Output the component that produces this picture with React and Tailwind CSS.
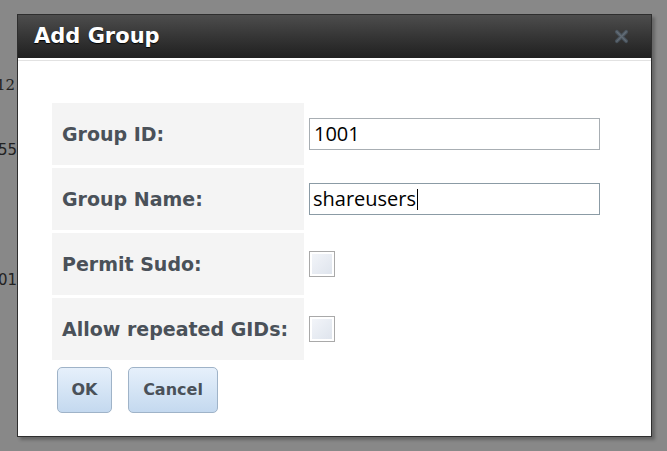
import React from "react";

function Row({ label, children }) {
  return (
    <div className="flex h-[62px] gap-[5px]">
      <div className="flex w-[252px] items-center bg-[#f4f4f4] pl-[10px] text-[19px] font-bold text-[#4a5159]">
        {label}
      </div>
      <div className="flex items-center">{children}</div>
    </div>
  );
}

function Checkbox() {
  return (
    <div className="h-[26px] w-[26px] border border-[#a9a9a9] bg-gradient-to-br from-[#f4f6fa] to-[#dde3ec] shadow-[inset_0_0_0_2px_#ffffff]" />
  );
}

export default function App() {
  return (
    <div
      className="relative h-[451px] w-[667px] overflow-hidden bg-[#888888]"
      style={{ fontFamily: '"DejaVu Sans", Verdana, sans-serif' }}
    >
      <div className="flex flex-col pt-[78px] text-[15px] leading-none text-[#222]" style={{ fontFamily: '"DejaVu Serif", serif' }}>
        <span className="ml-[-4px]">12</span>
        <span className="ml-[-2px] mt-[50px]" style={{ fontFamily: '"DejaVu Sans", sans-serif' }}>55</span>
        <span className="ml-[-2px] mt-[115px]" style={{ fontFamily: '"DejaVu Sans", sans-serif' }}>01</span>
      </div>

      <div className="absolute left-[17px] top-[14px] flex h-[423px] w-[635px] flex-col border border-[#2e2e2e] bg-white shadow-[3px_3px_3px_rgba(0,0,0,0.25)]">
        <div className="flex h-[43px] shrink-0 items-center justify-between bg-gradient-to-b from-[#4d4d4d] to-[#202020] pl-[16px] pr-[22px]">
          <span className="text-[21px] font-bold text-white [text-shadow:0_1px_1px_#000]">Add Group</span>
          <svg width="15" height="15" viewBox="0 0 16 16" className="opacity-50">
            <path d="M3 3 L13 13 M13 3 L3 13" stroke="#5d7184" strokeWidth="4" strokeLinecap="round" />
            <path d="M3 3 L13 13 M13 3 L3 13" stroke="#8fa2b4" strokeWidth="1.5" strokeLinecap="round" />
          </svg>
        </div>
        <div className="mt-[2px] h-px bg-[#e2e2e2]" />
        <div className="flex flex-col pl-[34px] pt-[42px]">
          <div className="flex flex-col gap-[3px]">
            <Row label="Group ID:">
              <div className="flex h-[32px] w-[291px] items-center border border-[#a8aeb3] pl-[4px] text-[20px] text-black" style={{ fontFamily: '"Open Sans", "DejaVu Sans", sans-serif' }}>
                1001
              </div>
            </Row>
            <Row label="Group Name:">
              <div className="flex h-[32px] w-[291px] items-center border border-[#8b9ba5] pl-[3px] text-[20px] text-black" style={{ fontFamily: '"Open Sans", "DejaVu Sans", sans-serif' }}>
                shareusers<span className="ml-px inline-block h-[21px] w-px bg-black" />
              </div>
            </Row>
            <Row label="Permit Sudo:">
              <Checkbox />
            </Row>
            <Row label="Allow repeated GIDs:">
              <Checkbox />
            </Row>
          </div>
          <div className="mt-[7px] flex gap-[16px] pl-[5px]">
            <div className="flex h-[46px] w-[55px] items-center justify-center rounded-[5px] border border-[#9fb3c8] bg-gradient-to-b from-[#e6f0fb] to-[#c4d9ef] text-[16px] font-bold text-[#4a5159]">
              OK
            </div>
            <div className="flex h-[46px] w-[90px] items-center justify-center rounded-[5px] border border-[#9fb3c8] bg-gradient-to-b from-[#e6f0fb] to-[#c4d9ef] text-[16px] font-bold text-[#4a5159]">
              Cancel
            </div>
          </div>
        </div>
      </div>
    </div>
  );
}
